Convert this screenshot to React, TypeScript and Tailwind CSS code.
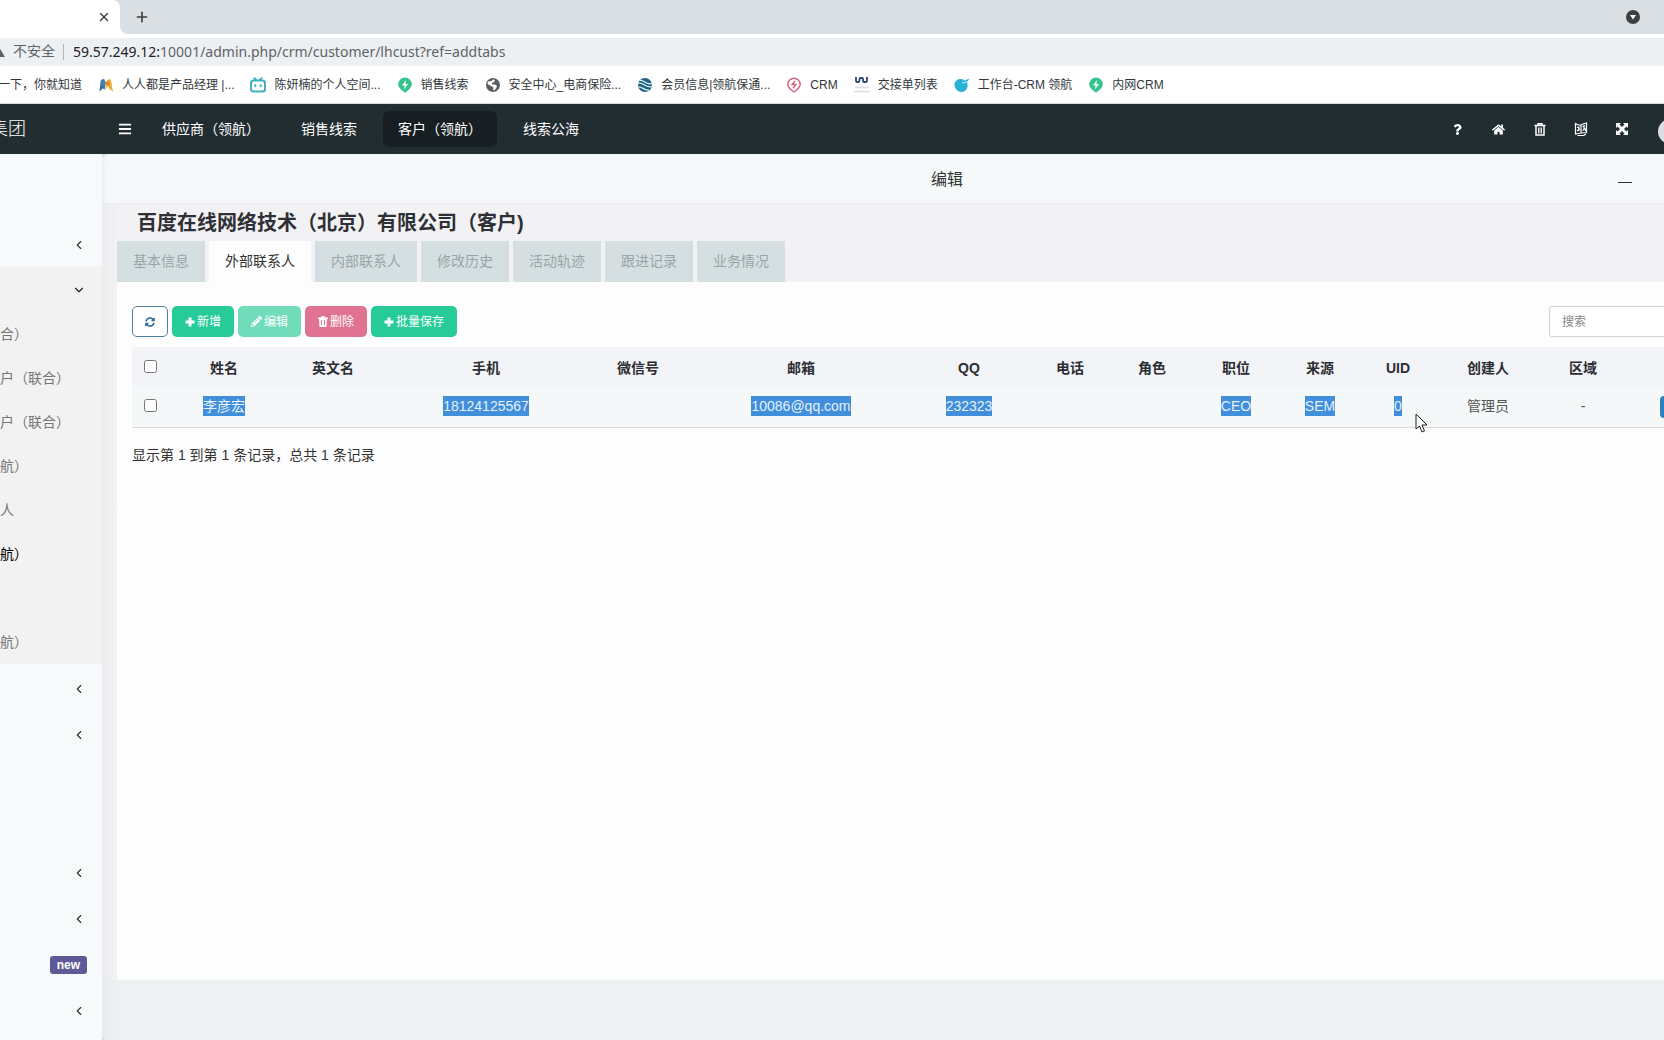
import React from "react";
import { FaBars, FaHome, FaPencilAlt, FaQuestion, FaSyncAlt } from "react-icons/fa";
import { ChevronDown, ChevronLeft, Plus, X } from "lucide-react";

const BoltPin = () => (
  <svg viewBox="0 0 16 16" className="size-4" aria-hidden="true">
    <path d="M8 .5a6.800 6.800 0 0 1 6.800 6.800c0 3.200-2.500 5.500-6.800 8.500-4.300-3-6.800-5.300-6.800-8.500A6.800 6.800 0 0 1 8 .5z" fill="#35c48d" />
    <path d="M9 3 5 8.600h2.600L7 12.500l4-5.500H8.400z" fill="#fff" />
  </svg>
);
const BoltPinOutline = () => (
  <svg viewBox="0 0 16 16" className="size-4" aria-hidden="true" fill="none" stroke="#d4667c" strokeWidth="1.500">
    <path d="M8 1.200a6.200 6.200 0 0 1 6.200 6.200c0 2.600-2 4.500-6.200 7.600-4.200-3.100-6.200-5-6.200-7.600A6.200 6.200 0 0 1 8 1.200z" />
    <path d="M9 4 6.200 7.500h3.600L7 11" />
  </svg>
);
const Wings = () => (
  <svg viewBox="0 0 16 16" className="size-4" aria-hidden="true">
    <path d="M1.500 14.500 2.500 4q2-3 4-1.500L8 6l-1.500 7-2-2z" fill="#4a7fae" />
    <path d="M1.500 14.500 4 8l1 3z" fill="#2c5f91" />
    <path d="M7.500 5.500 10 3q1.500-2 3 .5L15 14.500 11.500 12 10 8.500 7.500 13z" fill="#efae3a" />
    <path d="M10 3l2 4-2 2-2.500-3z" fill="#d98c22" />
  </svg>
);
const TvFace = () => (
  <svg viewBox="0 0 16 16" className="size-4" aria-hidden="true" fill="none" stroke="#3fb0bd" strokeWidth="2" strokeLinecap="round">
    <rect x="1" y="3.500" width="14" height="11" rx="2.500" />
    <path d="M4.500 1.200 6 3M11.500 1.200 10 3M5.300 8.300v1M10.700 8.300v1" />
  </svg>
);
const Globe = () => (
  <svg viewBox="0 0 16 16" className="size-4" aria-hidden="true">
    <circle cx="8" cy="8" r="7" fill="#5a5e63" />
    <path d="M3 4.500 6.500 4 8 2.500l2 .5-1 2-2 1v1.500h3L12 9l-1 2.500-2 2-1-.5.500-2.500L6 9 2.500 7z" fill="#fff" />
  </svg>
);
const Waves = () => (
  <svg viewBox="0 0 16 16" className="size-4" aria-hidden="true">
    <circle cx="8" cy="8" r="7" fill="#1c6480" />
    <path d="M3 3.500c4-1 6 5 12 3M1 6.500c5-2 7 5 14 3M1 10c4-1 6 4 11 3" stroke="#e6f4f8" strokeWidth="1.200" fill="none" />
  </svg>
);
const WMark = () => (
  <svg viewBox="0 0 16 16" className="size-4" aria-hidden="true" fill="none">
    <path d="M2 0v3.500q0 1.500 1 1.500h1.500q1 0 1-1.500V2q0-1 1-1H8q1 0 1 1v2q0 1 1 1h2q1 0 1-1.500V0" stroke="#27496d" strokeWidth="1.800" />
    <path d="M1 10.500h14M0 14.500h16" stroke="#d9dde3" strokeWidth="1.600" />
  </svg>
);
const Comet = () => (
  <svg viewBox="0 0 16 16" className="size-4" aria-hidden="true">
    <path d="M.5 6.500c1-4 6-6 10-3l5-2-2.500 4C15 10 12 15 7.500 15S0 10.500.5 6.500z" fill="#28b3d6" />
    <path d="M8 5c1.500 1.500 3 1 5-1" stroke="#e5f7fb" fill="none" />
  </svg>
);

const bookmarks: { label: string; icon: React.ReactNode }[] = [
  { label: "人人都是产品经理 |...", icon: <Wings /> },
  { label: "陈妍楠的个人空间...", icon: <TvFace /> },
  { label: "销售线索", icon: <BoltPin /> },
  { label: "安全中心_电商保险...", icon: <Globe /> },
  { label: "会员信息|领航保通...", icon: <Waves /> },
  { label: "CRM", icon: <BoltPinOutline /> },
  { label: "交接单列表", icon: <WMark /> },
  { label: "工作台-CRM 领航", icon: <Comet /> },
  { label: "内网CRM", icon: <BoltPin /> },
];

function BrowserChrome() {
  return (
    <div className="shrink-0 bg-white">
      <div className="flex h-[34px] items-stretch bg-white">
        <div className="flex w-[120px] shrink-0 items-center justify-end bg-[#dadfe3]">
          <div className="flex h-full w-full items-center justify-end rounded-tr-lg bg-white pr-[9px]">
            <button aria-label="关闭标签页" className="text-[#3c4043]"><X size={14} strokeWidth={2.5} /></button>
          </div>
        </div>
        <div className="flex flex-1 items-center justify-between rounded-bl-lg bg-[#dadfe3] pr-6 pl-[14px] text-[#3c4043]">
          <button aria-label="新标签页"><Plus size={16} strokeWidth={2.5} /></button>
          <button aria-label="搜索标签页" className="flex size-[14px] items-center justify-center rounded-full bg-[#3c4043]">
            <svg viewBox="0 0 8 8" className="size-2" aria-hidden="true"><path d="M1 2h6L4 6.500z" fill="#fff" /></svg>
          </button>
        </div>
      </div>
      <div className="mt-1 flex h-7 items-center bg-[#edf0f2] pb-px text-[14px] text-[#5f6368]">
        <svg viewBox="0 0 12 12" className="-ml-[7px] size-3 shrink-0" aria-hidden="true"><path d="M6 1l6 10H0z" fill="#5f6368" /></svg>
        <span className="ml-2">不安全</span>
        <span className="ml-2 h-4 w-px bg-[#b4b8bc]" />
        <span className="ml-[9px] font-['Noto_Sans'] text-[14px]">
          <span className="text-[#202124]">59.57.249.12:</span>10001/admin.php/crm/customer/lhcust?ref=addtabs
        </span>
      </div>
      <nav aria-label="书签" className="flex h-[38px] items-center gap-4 border-b border-[#d5dadd] text-[12px] whitespace-nowrap text-[#33373b]">
        <a href="#" className="-ml-[2px]">一下，你就知道</a>
        {bookmarks.map((b) => (
          <a key={b.label} href="#" className="flex items-center gap-2">
            {b.icon}
            {b.label}
          </a>
        ))}
      </nav>
    </div>
  );
}

const LanguageIcon = () => (
  <svg viewBox="0 0 14 14" className="size-[14px]" aria-hidden="true" fill="none" stroke="currentColor" strokeWidth="1.200">
    <path d="M1.500 3.500V1.500L4 3h3l2-1 3.500-1v9.500L7 11l-5.500 1V3.500M7 3v8M3 5.500l2.500-.5M3 9l3-2M4.500 4.500 5 9M8.500 4.500l2.500-.5M8.500 8.500l2.500-2 .5 2.500M10 3v5M3.500 13.500h6l2.500-1.500" />
  </svg>
);
const BinOutline = () => (
  <svg viewBox="0 0 12 13" className="h-[13px] w-3" aria-hidden="true" fill="none" stroke="currentColor">
    <path d="M.5 2.500h11M4 2V.8h4V2" strokeWidth="1.400" />
    <path d="M2 3v9h8V3" strokeWidth="1.500" />
    <path d="M4.500 4.500v6M6 4.500v6M7.500 4.500v6" strokeWidth=".9" />
  </svg>
);
const BinSolid = () => (
  <svg viewBox="0 0 10 11" className="h-[11px] w-[10px]" aria-hidden="true">
    <path d="M0 1.500h3L3.500 0h3L7 1.500h3V3H9l-.5 8h-7L1 3H0z" fill="currentColor" />
    <path d="M3.500 4v5M6.500 4v5" stroke="#e07392" />
  </svg>
);
const PlusSolid = () => (
  <svg viewBox="0 0 10 10" className="size-[10px]" aria-hidden="true">
    <path d="M5 .5v9M.5 5h9" stroke="currentColor" strokeWidth="3" />
  </svg>
);
const ExpandIcon = () => (
  <svg viewBox="0 0 12 12" className="size-3" aria-hidden="true" fill="currentColor">
    <path d="M0 0h5L3.500 1.500 6 4l2.500-2.500L7 0h5v5l-1.500-1.500L8 6l2.500 2.500L12 7v5H7l1.500-1.500L6 8l-2.500 2.500L5 12H0V7l1.500 1.500L4 6 1.500 3.500 0 5z" />
  </svg>
);

const topTabs = ["供应商（领航）", "销售线索", "客户（领航）", "线索公海"];
const topActions: { label: string; icon: React.ReactNode }[] = [
  { label: "帮助", icon: <FaQuestion size={11} /> },
  { label: "主页", icon: <FaHome size={13} /> },
  { label: "清除缓存", icon: <BinOutline /> },
  { label: "语言", icon: <LanguageIcon /> },
  { label: "全屏", icon: <ExpandIcon /> },
];

function TopBar() {
  return (
    <header className="flex h-[50px] shrink-0 items-center overflow-hidden bg-[#222d32] text-[14px] text-white">
      <div className="flex w-[102px] shrink-0 overflow-hidden">
        <span className="-ml-[10px] text-[18px] font-light">集团</span>
      </div>
      <button aria-label="切换菜单" className="mr-[15px] ml-4 flex w-[14px] justify-center"><FaBars size={14} /></button>
      <nav className="flex flex-1 gap-[11px]">
        {topTabs.map((t, i) => (
          <a key={t} href="#" className={i === 2 ? "flex h-9 items-center rounded-md bg-[#181f22] px-[15px]" : "flex h-9 items-center px-[15px]"}>
            {t}
          </a>
        ))}
      </nav>
      <div className="flex shrink-0 items-center">
        {topActions.map((a) => (
          <button key={a.label} aria-label={a.label} className="flex h-9 w-[41px] items-center justify-center">{a.icon}</button>
        ))}
        <button aria-label="用户" className="ml-4 w-[6px] overflow-hidden pt-1">
          <span className="block size-[25px] rounded-full bg-[#dcdde2]" />
        </button>
      </div>
    </header>
  );
}

const MenuRow = ({ children }: { children?: React.ReactNode }) => (
  <li className="flex h-11 items-center justify-end pt-px pr-4 text-[#333]">{children}</li>
);
const Collapsed = () => (
  <button aria-label="展开"><ChevronLeft size={14} /></button>
);
const subMenu = ["合）", "户（联合）", "户（联合）", "航）", "人", "航）", "", "航）"];

function Sidebar() {
  return (
    <aside className="w-[102px] shrink-0 overflow-hidden bg-[#f6fafb] pt-[68px] text-[14px]">
      <ul className="flex flex-col">
        <MenuRow><Collapsed /></MenuRow>
        <li className="bg-[#f2f2f2]">
          <div className="flex h-[46px] items-center justify-end pt-px pr-4 text-[#222]">
            <button aria-label="收起"><ChevronDown size={14} /></button>
          </div>
          <ul>
            {subMenu.map((s, i) => (
              <li key={i} className={i === 5 ? "flex h-11 items-center text-black" : "flex h-11 items-center text-[#777]"}>
                {s && <a href="#">{s}</a>}
              </li>
            ))}
          </ul>
        </li>
      </ul>
      <ul className="mt-[2px] flex flex-col gap-[2px]">
        <MenuRow><Collapsed /></MenuRow>
        <MenuRow><Collapsed /></MenuRow>
        <MenuRow />
        <MenuRow />
        <MenuRow><Collapsed /></MenuRow>
        <MenuRow><Collapsed /></MenuRow>
        <MenuRow>
          <span className="-mr-px rounded-[3px] bg-[#605998] px-[7px] text-[12px] leading-[18px] font-bold text-white">new</span>
        </MenuRow>
        <MenuRow><Collapsed /></MenuRow>
      </ul>
    </aside>
  );
}

const panelTabs = ["基本信息", "外部联系人", "内部联系人", "修改历史", "活动轨迹", "跟进记录", "业务情况"];

const columns: { head: string; value: string; width: string; selected?: boolean }[] = [
  { head: "姓名", value: "李彦宏", width: "w-[110px]", selected: true },
  { head: "英文名", value: "", width: "w-[108px]" },
  { head: "手机", value: "18124125567", width: "w-[198px]", selected: true },
  { head: "微信号", value: "", width: "w-[106px]" },
  { head: "邮箱", value: "10086@qq.com", width: "w-[220px]", selected: true },
  { head: "QQ", value: "232323", width: "w-[116px]", selected: true },
  { head: "电话", value: "", width: "w-[86px]" },
  { head: "角色", value: "", width: "w-[78px]" },
  { head: "职位", value: "CEO", width: "w-[90px]", selected: true },
  { head: "来源", value: "SEM", width: "w-[78px]", selected: true },
  { head: "UID", value: "0", width: "w-[78px]", selected: true },
  { head: "创建人", value: "管理员", width: "w-[102px]" },
  { head: "区域", value: "-", width: "w-[88px]" },
];

function ContactsTable() {
  return (
    <table className="mt-[10px] w-full table-fixed border-collapse text-center text-[14px]">
      <colgroup>
        <col className="w-[37px]" />
        {columns.map((c) => <col key={c.head} className={c.width} />)}
        <col className="w-[135px]" />
      </colgroup>
      <thead>
        <tr className="h-10 bg-[#f3f4f8] text-[#2b2d33]">
          <th className="pb-[2px]"><input type="checkbox" aria-label="全选" className="mx-auto block size-[13px]" /></th>
          {columns.map((c) => <th key={c.head} className="pt-[2px] font-bold">{c.head}</th>)}
          <th aria-label="操作" />
        </tr>
      </thead>
      <tbody>
        <tr className="h-10 border-b border-[#d8dadd] bg-[#f4f8f9] text-[#555]">
          <td className="pb-[2px]"><input type="checkbox" aria-label="选择 李彦宏" className="mx-auto block size-[13px]" /></td>
          {columns.map((c) => (
            <td key={c.head}>
              {c.selected ? <span className="inline-block bg-[#418edb] leading-5 text-[#e4f2fc]">{c.value}</span> : c.value}
            </td>
          ))}
          <td className="pl-[33px]"><button aria-label="编辑此行" className="block h-[22px] w-6 rounded bg-[#2f7fc4]" /></td>
        </tr>
      </tbody>
    </table>
  );
}

function Toolbar() {
  return (
    <div className="flex items-center gap-1 text-[12px] text-white">
      <button aria-label="刷新" className="flex h-[31px] w-9 items-center justify-center rounded-[5px] border border-[#4f80a3] bg-white text-[#2c6a94]"><FaSyncAlt size={10} /></button>
      <button className="flex h-[31px] items-center gap-[2px] rounded-[5px] bg-[#26cb98] px-[13px]"><PlusSolid />新增</button>
      <button className="flex h-[31px] items-center gap-[2px] rounded-[5px] bg-[#70dcba] px-[13px]"><FaPencilAlt size={11} />编辑</button>
      <button className="flex h-[31px] items-center gap-[2px] rounded-[5px] bg-[#e07392] px-[13px]"><BinSolid />删除</button>
      <button className="flex h-[31px] items-center gap-[2px] rounded-[5px] bg-[#26cb98] px-[13px]"><PlusSolid />批量保存</button>
      <input type="search" aria-label="搜索" placeholder="搜索" className="ml-auto h-[31px] w-[213px] rounded-[3px] border border-[#cfd3dc] bg-white px-3 text-[12px] text-[#555] placeholder:text-[#888]" />
    </div>
  );
}

function EditDialog() {
  return (
    <section aria-label="编辑" className="-mr-32 flex min-w-0 flex-1 flex-col rounded-l-[6px] bg-[#edf1f2]">
      <div className="grid h-[49px] shrink-0 grid-cols-[1fr_auto_1fr] items-center rounded-tl-[6px] bg-[#f5f9fa] pt-[3px] text-[16px] text-[#333] shadow-[inset_6px_0_6px_-4px_rgba(0,0,0,0.05)]">
        <span />
        <h2>编辑</h2>
        <button aria-label="最小化" className="mr-[159px] justify-self-end pt-1 text-[#2e2d3c]">
          <svg viewBox="0 0 16 16" className="size-4" aria-hidden="true"><path d="M1 8.500h14" stroke="currentColor" /></svg>
        </button>
      </div>
      <div className="flex flex-1 flex-col border-t border-[#eaebec] bg-linear-to-r from-[#ebebed] via-[#f2f2f4] via-[15px] to-[#f2f2f4] px-[15px]">
        <h1 className="pt-[2px] pb-px pl-5 text-[20px] leading-[34px] font-bold text-[#2f3035]">百度在线网络技术（北京）有限公司（客户)</h1>
        <div role="tablist" className="flex gap-1">
          {panelTabs.map((t, i) => (
            <button
              key={t}
              role="tab"
              aria-selected={i === 1}
              className={i === 1 ? "h-[41px] bg-[#fdfdfd] px-4 text-[14px] text-[#333]" : "h-[41px] bg-[#d5dfe1] px-4 text-[14px] text-[#98a5a8]"}
            >
              {t}
            </button>
          ))}
        </div>
        <div role="tabpanel" className="flex-1 bg-[#fdfdfd] px-[15px] pt-6">
          <Toolbar />
          <ContactsTable />
          <p className="pt-[17px] text-[14px] leading-5 text-[#333]">显示第 1 到第 1 条记录，总共 1 条记录</p>
        </div>
      </div>
      <div className="h-[60px] shrink-0 rounded-bl-[6px] bg-linear-to-r from-[#e8ebed] to-[#edf1f2] to-[15px]" />
    </section>
  );
}

export default function App() {
  return (
    <div className="relative flex h-screen flex-col overflow-hidden bg-[#d8dcdf] font-['Liberation_Sans','Noto_Sans_CJK_SC',sans-serif]">
      <BrowserChrome />
      <TopBar />
      <main className="flex min-h-0 flex-1 overflow-hidden">
        <Sidebar />
        <EditDialog />
      </main>
      <svg viewBox="0 0 13 20" className="pointer-events-none absolute top-[413px] left-[1415px] h-5 w-[13px]" aria-hidden="true">
        <path d="M1 1v15l3.500-3 2.500 6 2.500-1-2.500-6H12z" fill="#fff" stroke="#222" />
      </svg>
    </div>
  );
}
